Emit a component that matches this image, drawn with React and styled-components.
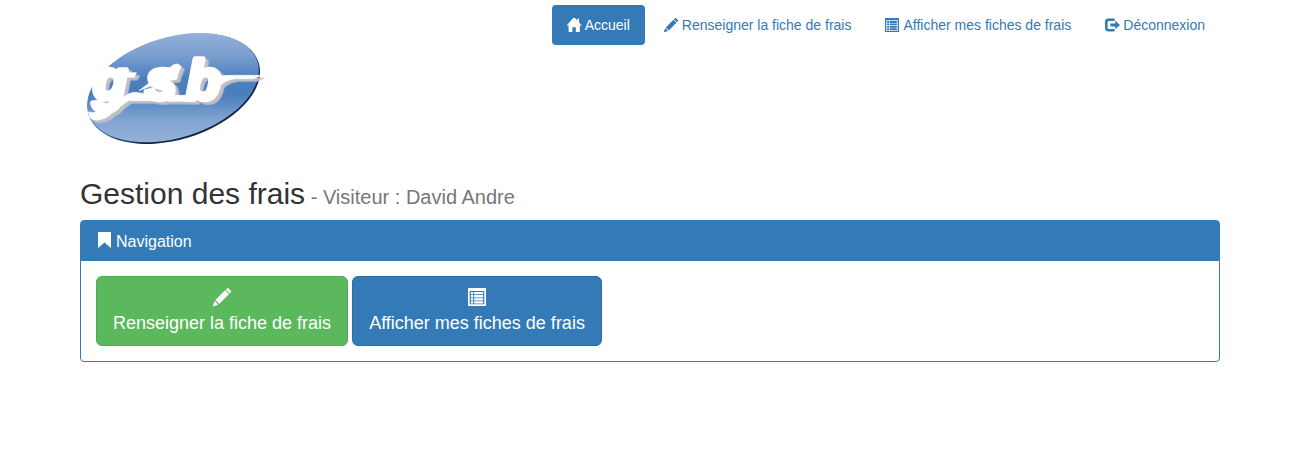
import React from "react";
import styled, { createGlobalStyle } from "styled-components";

const BLUE = "#337ab7";

const GlobalStyle = createGlobalStyle`
  *, *::before, *::after { box-sizing: border-box; }
  body {
    margin: 0;
    background: #fff;
    color: #333;
    font-family: "Liberation Sans", Arial, Helvetica, sans-serif;
    font-size: 14px;
    line-height: 20px;
  }
`;

const Page = styled.div`
  padding-right: 5px;
`;

const Container = styled.div`
  max-width: 1140px;
  margin: 0 auto;
`;

const Header = styled.header`
  display: flex;
  justify-content: space-between;
  align-items: flex-start;
  padding-top: 5px;
`;

const LogoImage = styled.svg`
  display: block;
  flex: none;
  width: 190px;
  height: 152px;
`;

const Letters = styled.g`
  fill: #fff;
  stroke: #fff;
  stroke-linejoin: round;
  filter: drop-shadow(10px 8px 0 #bfc0c4);
`;

const Pills = styled.ul`
  display: flex;
  flex-wrap: wrap;
  gap: 4px;
  margin: 0;
  padding: 0;
  list-style: none;
`;

const PillLink = styled.a`
  display: flex;
  align-items: center;
  gap: 4px;
  padding: 10px 15px;
  border-radius: 4px;
  text-decoration: none;
  white-space: nowrap;
  color: ${({ $active }) => ($active ? "#fff" : BLUE)};
  background: ${({ $active }) => ($active ? BLUE : "transparent")};
`;

const Glyph = styled.svg`
  display: block;
  flex: none;
  overflow: visible;
  width: ${({ $size }) => $size}px;
  height: ${({ $size }) => $size}px;
  fill: currentColor;
`;

const Title = styled.h2`
  margin: 20px 0 10px;
  font-size: 30px;
  line-height: 33px;
  font-weight: 500;
`;

const Subtitle = styled.small`
  font-size: 20px;
  line-height: 20px;
  font-weight: 400;
  color: #777;
`;

const Panel = styled.section`
  border: 1px solid ${BLUE};
  border-radius: 4px;
`;

const PanelHeading = styled.div`
  padding: 12px 15px 10px;
  background: ${BLUE};
  color: #fff;
`;

const PanelTitle = styled.h3`
  display: flex;
  align-items: flex-start;
  gap: 4px;
  margin: 0;
  font-size: 16px;
  line-height: 18px;
  font-weight: 500;
`;

const PanelBody = styled.div`
  display: flex;
  flex-wrap: wrap;
  gap: 4px;
  padding: 15px;
`;

const ActionLink = styled.a`
  display: flex;
  flex-direction: column;
  align-items: center;
  padding: 11px 16px 10px;
  border: 1px solid ${({ $border }) => $border};
  border-radius: 6px;
  background: ${({ $fill }) => $fill};
  color: #fff;
  font-size: 18px;
  line-height: 24px;
  text-decoration: none;
  gap: 5px;
`;

const HomeIcon = ({ size }) => (
  <Glyph $size={size} viewBox="0 0 14 14" aria-hidden="true">
    <path d="M-.4 7.6 L6.2 .1 Q7.1 -.8 8 .1 L10.2 2.4 V.8 H12.1 V4.5 L14.8 7.6 H12.8 V13.5 Q12.8 14 12.3 14 H8.8 V9.2 H5.4 V14 H2.1 Q1.6 14 1.6 13.5 V7.6 Z" />
  </Glyph>
);

const PencilIcon = ({ size }) => (
  <Glyph $size={size} viewBox="0 0 14 14" aria-hidden="true">
    <path d="M10.9 .3 Q11.5 -.3 12.1 .3 L13.9 2.1 Q14.5 2.7 13.9 3.3 L12.9 4.3 L9.9 1.3 Z M9.4 1.8 L12.4 4.8 L4.8 12.4 L1.8 9.4 Z M1.2 10.1 L4.1 13 L-.2 14.3 Z" />
  </Glyph>
);

const ListIcon = ({ size }) => (
  <Glyph $size={size} viewBox="0 0 14 14" aria-hidden="true">
    <path
      fillRule="evenodd"
      d="M.3 0 H13.7 Q14 0 14 .3 V13.7 Q14 14 13.7 14 H.3 Q0 14 0 13.7 V.3 Q0 0 .3 0 Z M1.3 2.3 V12.7 H12.7 V2.3 Z"
    />
    <path d="M2.2 3.1 H4.1 V4.9 H2.2 Z M4.8 3.1 H11.8 V4.9 H4.8 Z M2.2 5.5 H4.1 V7.3 H2.2 Z M4.8 5.5 H11.8 V7.3 H4.8 Z M2.2 7.9 H4.1 V9.7 H2.2 Z M4.8 7.9 H11.8 V9.7 H4.8 Z M2.2 10.3 H4.1 V12 H2.2 Z M4.8 10.3 H11.8 V12 H4.8 Z" />
  </Glyph>
);

const LogOutIcon = ({ size }) => (
  <Glyph $size={size} viewBox="0 0 14 14" aria-hidden="true">
    <path d="M3.4 .6 H9.6 V3 H3.8 Q2.6 3 2.6 4.2 V9.8 Q2.6 11 3.8 11 H9.6 V13.4 H3.4 Q0 13.4 0 10 V4 Q0 .6 3.4 .6 Z M10.2 2.7 L15 7 L10.2 11.3 V8.6 H5.4 V5.4 H10.2 Z" />
  </Glyph>
);

const BookmarkIcon = ({ size }) => (
  <Glyph $size={size} viewBox="0 0 16 16" aria-hidden="true">
    <path d="M2 -1 H15 V15 L8.5 9.4 L2 15 Z" />
  </Glyph>
);

const Logo = () => (
  <LogoImage viewBox="15 -45 570 456" role="img" aria-label="gsb">
    <defs>
      <linearGradient
        id="oval"
        gradientUnits="userSpaceOnUse"
        gradientTransform="rotate(17 294 203)"
        x1="294"
        y1="38"
        x2="294"
        y2="370"
      >
        <stop offset="0" stopColor="#94b0d8" />
        <stop offset="0.2" stopColor="#7b9fd0" />
        <stop offset="0.42" stopColor="#4b7ebe" />
        <stop offset="0.56" stopColor="#4b7ebe" />
        <stop offset="0.8" stopColor="#83a5d3" />
        <stop offset="1" stopColor="#95b1d9" />
      </linearGradient>
      <linearGradient
        id="rim"
        gradientUnits="userSpaceOnUse"
        gradientTransform="rotate(17 296 206)"
        x1="220"
        y1="60"
        x2="380"
        y2="350"
      >
        <stop offset="0" stopColor="#7d9cc4" />
        <stop offset="0.5" stopColor="#4871a6" />
        <stop offset="0.8" stopColor="#122744" />
      </linearGradient>
    </defs>
    <ellipse cx="296" cy="206" rx="267" ry="153" transform="rotate(-17 296 206)" fill="url(#rim)" />
    <ellipse cx="294" cy="203" rx="265" ry="151" transform="rotate(-17 294 203)" fill="url(#oval)" />
    <Letters>
      <text
        x="54 212 334"
        y="236"
        fontFamily="'Liberation Sans', Arial, sans-serif"
        fontSize="168"
        fontWeight="700"
        fontStyle="italic"
        strokeWidth="16"
      >
        gsb
      </text>
      <path
        d="M130 158 H184 L178 172 H150 Z M138 240 Q162 212 190 218 L236 226 V242 H160 Q130 262 96 292 Q62 308 46 294 L40 276 Q78 284 110 250 Z M192 212 L296 134 Q312 128 318 140 L306 170 L262 184 Z M280 226 H360 V244 H280 Z M412 182 Q428 166 462 166 H558 L536 176 H480 Q446 180 426 206 Z"
        strokeWidth="2"
      />
    </Letters>
  </LogoImage>
);

const navItems = [
  { label: "Accueil", Icon: HomeIcon, active: true },
  { label: "Renseigner la fiche de frais", Icon: PencilIcon },
  { label: "Afficher mes fiches de frais", Icon: ListIcon },
  { label: "Déconnexion", Icon: LogOutIcon },
];

export default function App() {
  return (
    <Page>
      <GlobalStyle />
      <Container>
        <Header>
          <Logo />
          <nav>
            <Pills>
              {navItems.map(({ label, Icon, active }) => (
                <li key={label}>
                  <PillLink href="#" $active={active} aria-current={active ? "page" : undefined}>
                    <Icon size={14} />
                    {label}
                  </PillLink>
                </li>
              ))}
            </Pills>
          </nav>
        </Header>
        <main>
          <Title>
            Gestion des frais<Subtitle> - Visiteur : David Andre</Subtitle>
          </Title>
          <Panel>
            <PanelHeading>
              <PanelTitle>
                <BookmarkIcon size={16} />
                Navigation
              </PanelTitle>
            </PanelHeading>
            <PanelBody>
              <ActionLink href="#" $fill="#5cb85c" $border="#4cae4c">
                <PencilIcon size={18} />
                Renseigner la fiche de frais
              </ActionLink>
              <ActionLink href="#" $fill={BLUE} $border="#2e6da4">
                <ListIcon size={18} />
                Afficher mes fiches de frais
              </ActionLink>
            </PanelBody>
          </Panel>
        </main>
      </Container>
    </Page>
  );
}
